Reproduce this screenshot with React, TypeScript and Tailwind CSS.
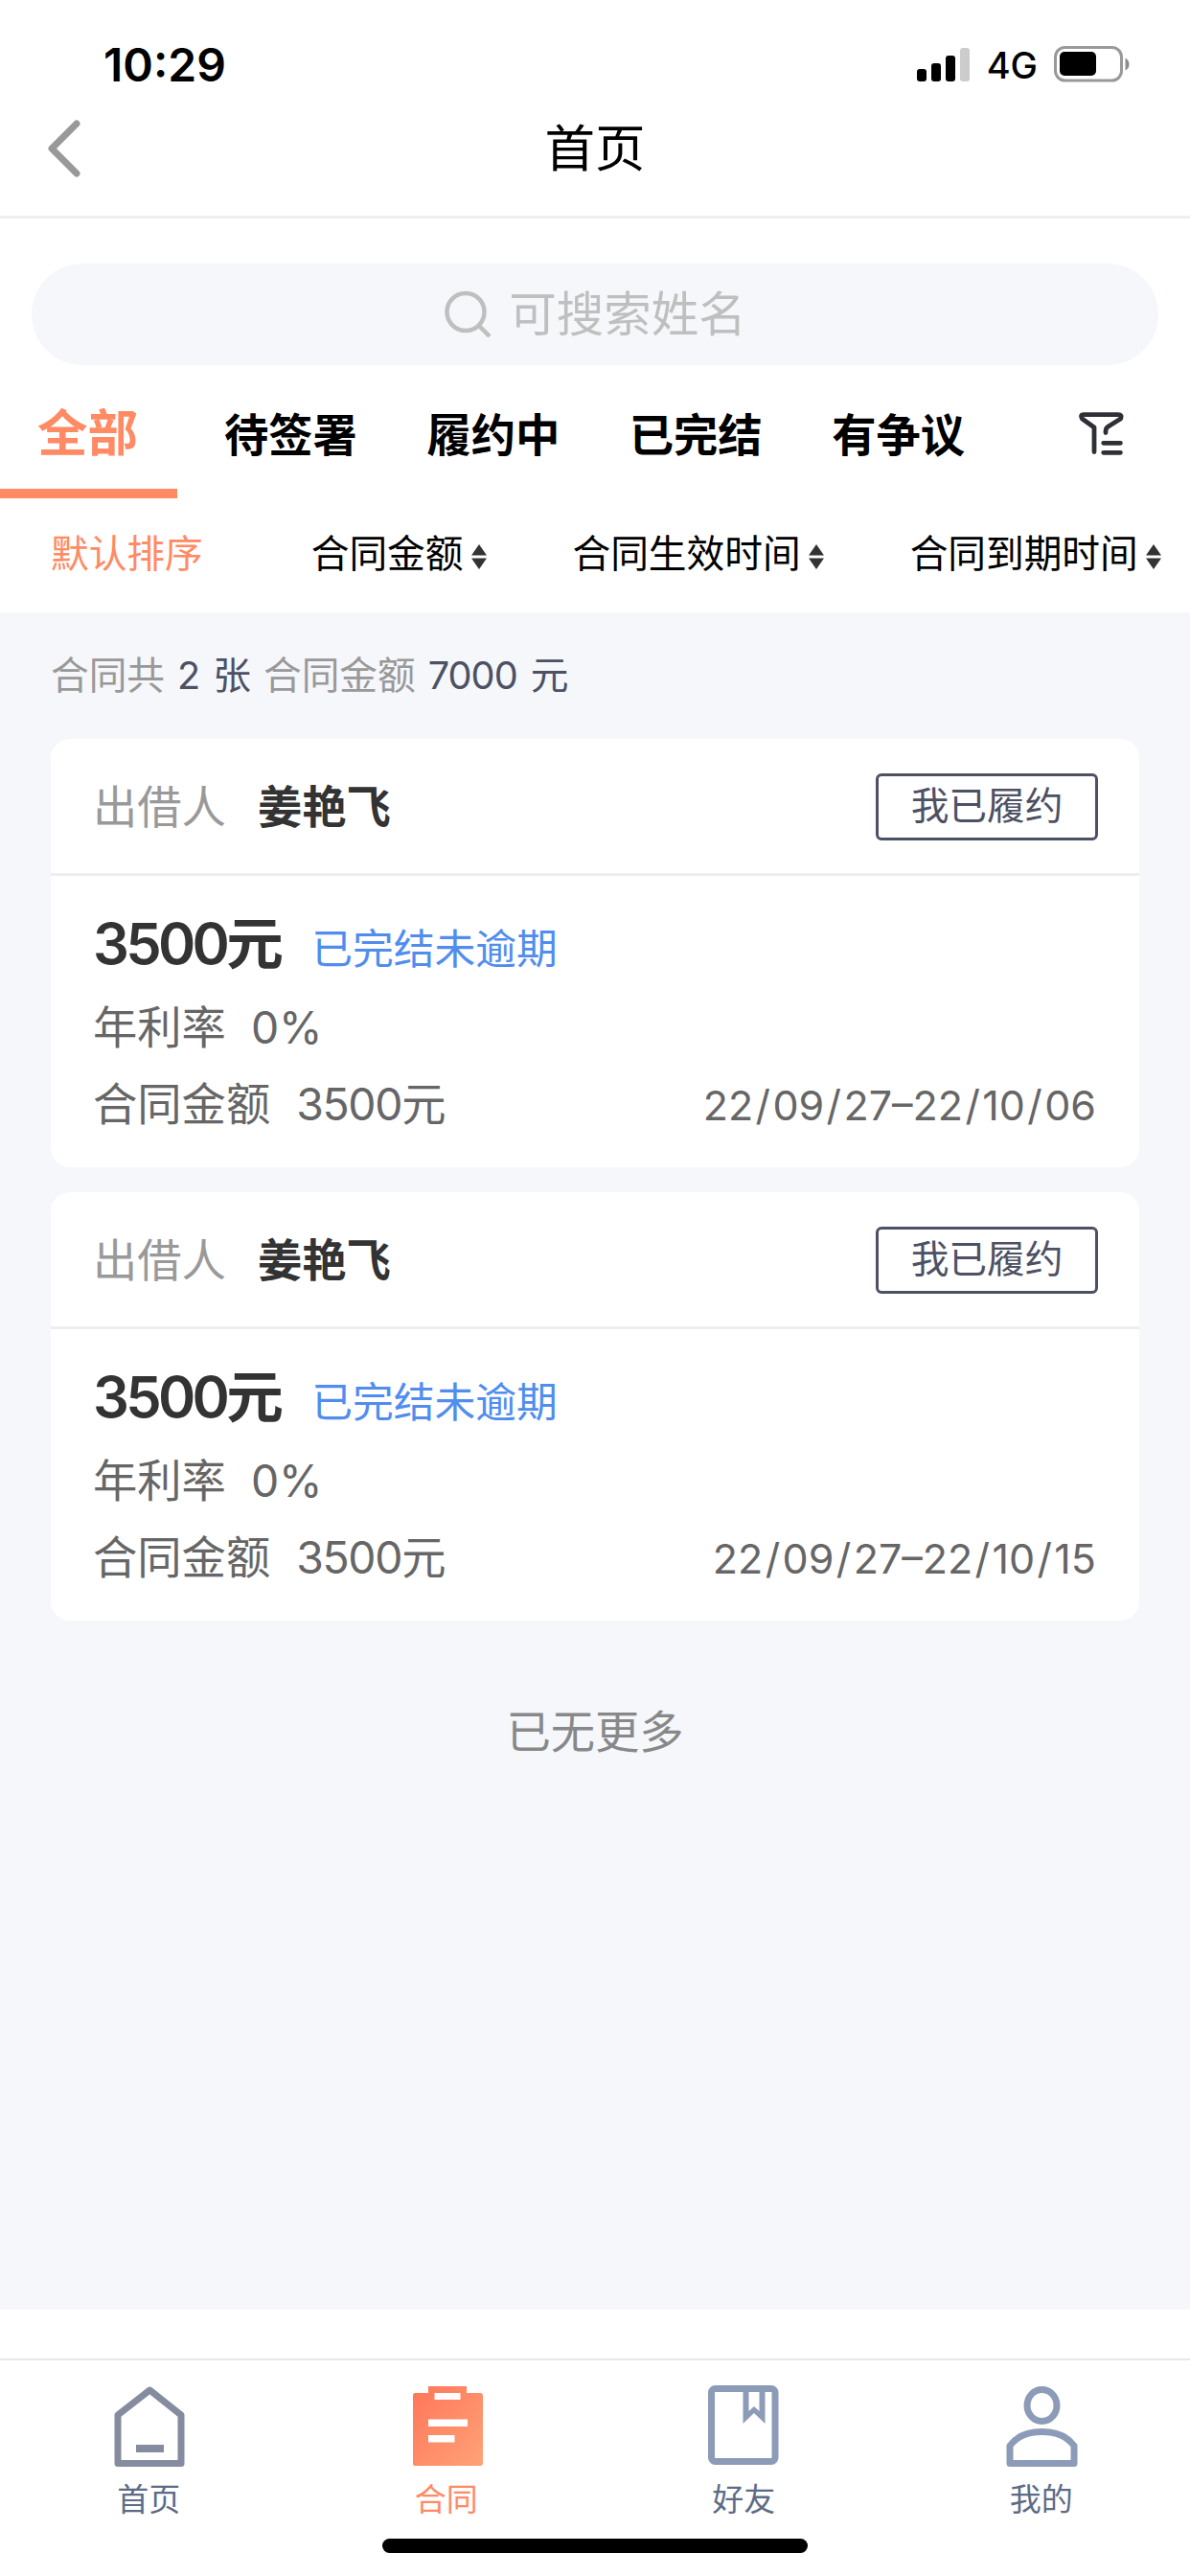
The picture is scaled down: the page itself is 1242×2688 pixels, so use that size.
import type { ReactNode } from "react";

const contracts = [
  { id: 1, lender: "姜艳飞", amount: 3500, rate: "0%", period: "22/09/27–22/10/06" },
  { id: 2, lender: "姜艳飞", amount: 3500, rate: "0%", period: "22/09/27–22/10/15" },
];

function StatusBar() {
  return (
    <div className="flex h-[100px] items-end justify-between pr-[62px] pl-[108px]">
      <span className="mb-1 text-[48px] leading-[56px] font-semibold">10:29</span>
      <div className="mb-[14px] flex items-end">
        <svg width="55" height="36" viewBox="0 0 55 36" className="mr-[18px]">
          <rect x="0" y="22" width="10" height="13" rx="3" />
          <rect x="15" y="16" width="10" height="19" rx="3" />
          <rect x="30" y="8" width="10" height="27" rx="3" />
          <rect x="45" y="0" width="10" height="35" rx="3" fill="#ccc" />
        </svg>
        <span className="mr-[17px] text-[38px] leading-9 font-medium">4G</span>
        <svg width="80" height="38" viewBox="0 0 80 38">
          <rect x="1.5" y="1.5" width="69" height="34.5" rx="10" fill="none" stroke="#999" strokeWidth="3" />
          <rect x="6" y="6" width="38" height="25" rx="5" />
          <path d="M74.500 12.500q4 2 4 6.500t-4 6.500z" fill="#8c8c8c" />
        </svg>
      </div>
    </div>
  );
}

function NavBar() {
  return (
    <div className="grid h-[128px] grid-cols-[100px_1fr_100px] items-center border-b-[3px] border-[#eeeeee] pb-[15px]">
      <svg width="34" height="60" viewBox="0 0 34 60" className="ml-[50px]">
        <path d="M30 4 4 30l26 26" fill="none" stroke="#999" strokeWidth="7" strokeLinecap="round" strokeLinejoin="round" />
      </svg>
      <h1 className="text-center text-[52.500px] leading-[60px]">首页</h1>
    </div>
  );
}

function SearchBox() {
  return (
    <div className="mx-[33px] mt-[47px] flex h-[106px] items-center justify-center gap-[17px] rounded-full bg-[#f5f7fb] text-[49.500px] text-[#bfbfbf]">
      <svg width="51" height="50" viewBox="0 0 51 50">
        <circle cx="23" cy="22.500" r="19.500" fill="none" stroke="currentColor" strokeWidth="4.500" />
        <path d="m36 36 12 12" stroke="currentColor" strokeWidth="4.500" />
      </svg>
      <span className="leading-[60px]">可搜索姓名</span>
    </div>
  );
}

function StateTabs() {
  return (
    <div className="flex h-[139px] items-stretch font-bold">
      <div className="w-[185px] border-b-[10px] border-[#ff8a63] pt-[41px] pl-[39px] text-[52.500px] leading-[60px] text-[#ff8a63]">
        全部
      </div>
      <div className="flex gap-[72.500px] pt-[43px] pl-[49px] text-[46.300px] leading-[60px]">
        <span>待签署</span>
        <span>履约中</span>
        <span>已完结</span>
        <span>有争议</span>
      </div>
      <svg width="48" height="48" viewBox="0 0 48 48" className="mt-[48px] ml-[119px]" fill="none" stroke="#2f3036" strokeWidth="4.800" strokeLinecap="round" strokeLinejoin="round">
        <path d="M16 42.500V17L3.500 8Q1 3.700 5 3.700h36q4.500 0 2.500 4.300L30 16.500q-2 1.500-2 4v2" />
        <path d="M25.700 33.300h17.700M25.700 43.300h17.700" />
      </svg>
    </div>
  );
}

function SortLabel({ children }: { children: ReactNode }) {
  return (
    <span className="flex items-center gap-2">
      {children}
      <svg width="16" height="26" viewBox="0 0 16 26" className="mt-[6px]" fill="#333">
        <path d="M8 0l8 11.500H0zM8 26l8-11.500H0z" />
      </svg>
    </span>
  );
}

function SortBar() {
  return (
    <div className="flex h-[119px] items-center pb-[4px] pl-[53px] text-[39.700px] leading-[60px]">
      <span className="mr-[113px] text-[#ff8a63]">默认排序</span>
      <div className="flex gap-[90px]">
        <SortLabel>合同金额</SortLabel>
        <SortLabel>合同生效时间</SortLabel>
        <SortLabel>合同到期时间</SortLabel>
      </div>
    </div>
  );
}

function Period({ value }: { value: string }) {
  return (
    <span className="ml-auto text-[43px]">
      {value.split("/").map((part, i) => (
        <span key={i}>
          {i > 0 && <span className="mx-[2.400px]">/</span>}
          {part}
        </span>
      ))}
    </span>
  );
}

function ContractCard({ contract }: { contract: (typeof contracts)[number] }) {
  return (
    <article className="mb-[26px] h-[447px] rounded-[20px] bg-white text-[46.300px] text-[#666]">
      <div className="flex h-[143px] items-center border-b-[3px] border-[#eeeeee] pt-[1px] pr-[43px] pl-[44px]">
        <span className="mr-[33px] pt-[2px] text-[#999]">出借人</span>
        <span className="pt-[2px] font-bold text-[#333]">{contract.lender}</span>
        <span className="ml-auto flex h-[70px] w-[232px] items-center justify-center rounded-md border-[3px] border-[#4d5163] pt-[1px] text-[39.700px] text-[#4d5163]">
          我已履约
        </span>
      </div>
      <div className="pr-[45px] pl-[44px]">
        <div className="flex items-baseline pt-[29px] leading-[83px]">
          <span className="mr-[33px] text-[59.600px] font-semibold tracking-[-3.700px] text-[#333]">{contract.amount}元</span>
          <span className="text-[42.800px] text-[#508dee]">已完结未逾期</span>
        </div>
        <div className="flex leading-[80px]">
          <span className="mr-[26px]">年利率</span>
          <span>{contract.rate}</span>
        </div>
        <div className="flex items-baseline leading-[80px]">
          <span className="mr-[27px]">合同金额</span>
          <span className="tracking-[-1.300px]">{contract.amount}元</span>
          <Period value={contract.period} />
        </div>
      </div>
    </article>
  );
}

function TabItem({ label, active, children }: { label: string; active?: boolean; children: ReactNode }) {
  return (
    <div className={`flex flex-1 flex-col items-center pt-[23px] text-[33px] ${active ? "text-[#ff8a63]" : "text-[#5d6b87]"}`}>
      {children}
      <span className="mt-[10px] leading-[44px]">{label}</span>
    </div>
  );
}

function TabBar() {
  return (
    <nav className="flex h-[227px] border-t-2 border-[#e8e8e8]">
      <TabItem label="首页">
        <svg width="76" height="90" viewBox="0 0 76 90" fill="none" stroke="#868ca0" strokeWidth="7" strokeLinejoin="round">
          <path d="M39.300 8 72 34v50.500H6V34z" />
          <path d="M25 69h29" strokeWidth="8" />
        </svg>
      </TabItem>
      <TabItem label="合同" active>
        <svg width="76" height="90" viewBox="0 0 76 90">
          <defs>
            <linearGradient id="clip" x1="0" y1="0" x2="1" y2="1">
              <stop offset="0" stopColor="#ff7659" />
              <stop offset="1" stopColor="#ffa277" />
            </linearGradient>
          </defs>
          <path d="M5 11h14V4h40v7h14q3 0 3 3v70q0 3-3 3H5q-2 0-2-3V14q0-3 2-3z" fill="url(#clip)" />
          <path d="M25.500 11h27v7h-27zM19 38.500h41v7.500H19zM19 55h27.500v7.500H19z" fill="#fff" />
        </svg>
      </TabItem>
      <TabItem label="好友">
        <svg width="76" height="90" viewBox="0 0 76 90" fill="none" stroke="#8c9bb7" strokeWidth="7">
          <rect x="4.500" y="6.500" width="66.500" height="76" rx="4" />
          <path d="M37.500 8v35l11.500-11 11.500 11V8h-6v22l-5.500-5-5.500 5V8z" fill="#8c9bb7" stroke="none" />
        </svg>
      </TabItem>
      <TabItem label="我的">
        <svg width="76" height="90" viewBox="0 0 76 90" fill="none" stroke="#8c9bb7" strokeWidth="7" strokeLinejoin="round">
          <ellipse cx="38.500" cy="24" rx="15.500" ry="16.500" />
          <path d="M5 84.500V66Q16 51.500 38.500 51.500T72 66v18.500z" />
        </svg>
      </TabItem>
    </nav>
  );
}

export default function App() {
  return (
    <div className="relative flex h-[2688px] w-[1242px] flex-col overflow-hidden bg-white font-['Inter','Noto_Sans_CJK_SC',sans-serif] text-black">
      <StatusBar />
      <NavBar />
      <SearchBox />
      <StateTabs />
      <SortBar />
      <main className="h-[1771px] bg-[#f5f7fb] px-[53px]">
        <p className="flex h-[132px] items-center pt-[2px] text-[39.700px] text-[#4d5163]">
          <span className="mr-[13px] text-[#999]">合同共</span>
          <span className="mr-[13px]">2</span>
          <span className="mr-[13px]">张</span>
          <span className="mr-[13px] text-[#999]">合同金额</span>
          <span className="mr-[14px] tracking-[-1px]">7000</span>
          <span>元</span>
        </p>
        {contracts.map((contract) => (
          <ContractCard key={contract.id} contract={contract} />
        ))}
        <p className="pt-[55px] text-center text-[46.300px] leading-[70px] text-[#888]">已无更多</p>
      </main>
      <div className="h-[51px]" />
      <TabBar />
      <div className="absolute bottom-6 left-[399px] h-[15px] w-[444px] rounded-full bg-black" />
    </div>
  );
}
